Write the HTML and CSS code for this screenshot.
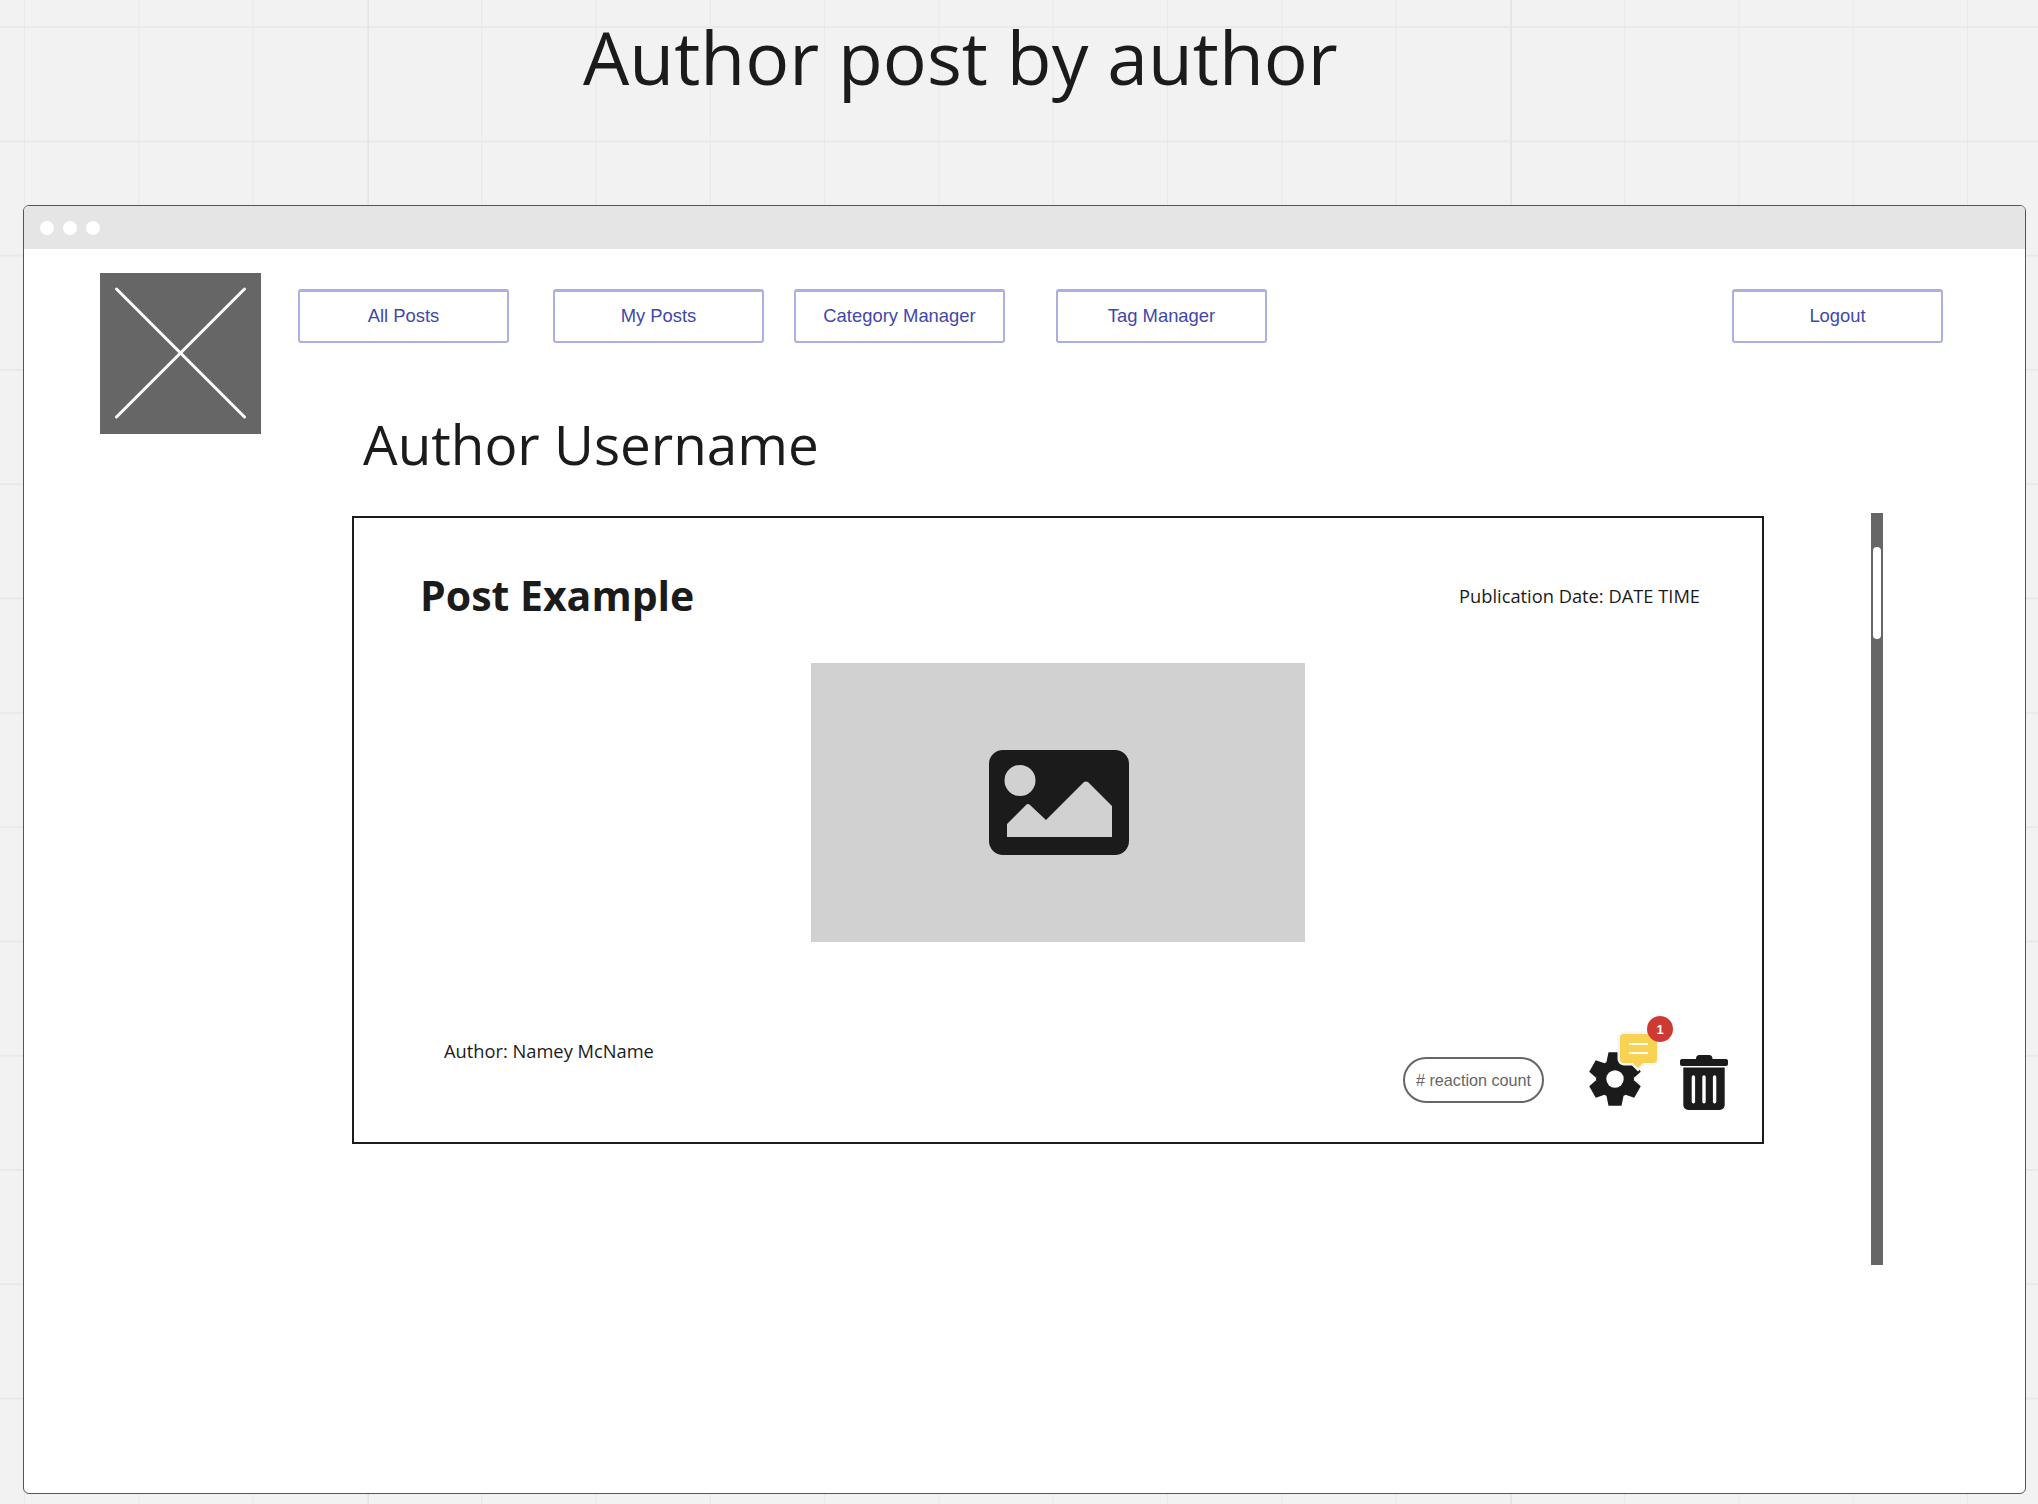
FILE: index.html
```html
<!DOCTYPE html>
<html lang="en">
<head>
    <meta charset="UTF-8">
    <meta name="viewport" content="width=device-width, initial-scale=1.0">
    <title>Author post by author</title>
    <link rel="stylesheet" href="styles.css">
</head>
<body>
    <h1 class="board-title">Author post by author</h1>

    <div class="window">
        <div class="window-bar">
            <span class="dot"></span>
            <span class="dot"></span>
            <span class="dot"></span>
        </div>

        <div class="window-body">
            <svg class="logo" viewBox="0 0 161 161">
                <rect width="161" height="161" fill="#666666"/>
                <path d="M16.500 16 L144.500 144 M144.500 16 L16.500 144" stroke="#ffffff" stroke-width="3" stroke-linecap="round"/>
            </svg>

            <div class="main">
                <nav class="nav">
                    <a class="nav-btn btn-all">All Posts</a>
                    <a class="nav-btn btn-my">My Posts</a>
                    <a class="nav-btn btn-cat">Category Manager</a>
                    <a class="nav-btn btn-tag">Tag Manager</a>
                    <a class="nav-btn btn-logout">Logout</a>
                </nav>

                <h2 class="username">Author Username</h2>

                <div class="feed">
                    <article class="post">
                        <header class="post-head">
                            <h3 class="post-title">Post Example</h3>
                            <span class="post-date">Publication Date: DATE TIME</span>
                        </header>

                        <div class="post-image">
                            <svg class="image-icon" viewBox="0 0 140 105">
                                <path fill="#1b1b1b" fill-rule="evenodd" d="M14 0 H126 A14 14 0 0 1 140 14 V91 A14 14 0 0 1 126 105 H14 A14 14 0 0 1 0 91 V14 A14 14 0 0 1 14 0 Z M31 15 A15.500 15.500 0 1 0 31 46 A15.500 15.500 0 1 0 31 15 Z M18 74 V87 H123 V56 L99 32 Q97 31 95 32 L57 70 L41 55 Q39 53 37 55 Z"/>
                            </svg>
                        </div>

                        <footer class="post-foot">
                            <span class="post-author">Author: Namey McName</span>
                            <div class="post-actions">
                                <span class="reactions"># reaction count</span>
                                <div class="gear-wrap">
                                    <svg class="gear" viewBox="-34 -34 68 68">
                                        <g fill="#1b1b1b">
                                            <circle r="19"/>
                                            <path d="M-8.500 -17 L-6.500 -26.700 H6.500 L8.500 -17 Z"/>
                                            <path transform="rotate(60)" d="M-8.500 -17 L-6.500 -26 H6.500 L8.500 -17 Z"/>
                                            <path transform="rotate(120)" d="M-8.500 -17 L-6.500 -26 H6.500 L8.500 -17 Z"/>
                                            <path transform="rotate(180)" d="M-8.500 -17 L-6.500 -26.700 H6.500 L8.500 -17 Z"/>
                                            <path transform="rotate(240)" d="M-8.500 -17 L-6.500 -26 H6.500 L8.500 -17 Z"/>
                                            <path transform="rotate(300)" d="M-8.500 -17 L-6.500 -26 H6.500 L8.500 -17 Z"/>
                                        </g>
                                        <circle r="8.700" fill="#ffffff"/>
                                    </svg>
                                    <svg class="comment" viewBox="0 0 47 42">
                                        <path fill="#f8d253" stroke="#f6f6f6" stroke-width="5" paint-order="stroke" d="M9 4 H38 A4 4 0 0 1 42 8 V29 A4 4 0 0 1 38 33 H28 L23 38 L18 33 H9 A4 4 0 0 1 5 29 V8 A4 4 0 0 1 9 4 Z"/>
                                        <path stroke="#fafafa" stroke-width="2.200" d="M14 14 H33 M14 23 H33"/>
                                    </svg>
                                    <span class="badge">1</span>
                                </div>
                                <svg class="trash" viewBox="0 0 48 55">
                                    <path fill="#1b1b1b" fill-rule="evenodd" d="M16 4 Q16 0 19.500 0 H29 Q32.500 0 32.500 4 H46 Q48 4 48 6 V9 Q48 11 46 11 H2 Q0 11 0 9 V6 Q0 4 2 4 Z M3.300 12.500 H44.700 V50 A5 5 0 0 1 39.700 55 H8.300 A5 5 0 0 1 3.300 50 Z M11.700 22 V46.700 A1.700 1.700 0 0 0 15.100 46.700 V22 A1.700 1.700 0 0 0 11.700 22 Z M22.300 22 V46.700 A1.700 1.700 0 0 0 25.700 46.700 V22 A1.700 1.700 0 0 0 22.300 22 Z M32.900 22 V46.700 A1.700 1.700 0 0 0 36.300 46.700 V22 A1.700 1.700 0 0 0 32.900 22 Z"/>
                                </svg>
                            </div>
                        </footer>
                    </article>

                    <div class="scrollbar"><div class="scroll-thumb"></div></div>
                </div>
            </div>
        </div>
    </div>
</body>
</html>
```

FILE: styles.css
```css
html, body {
    height: 100%;
}
body {
    margin: 0;
    height: 1504px;
    overflow: hidden;
    box-sizing: border-box;
    padding: 0 12px 10px 23px;
    display: flex;
    flex-direction: column;
    font-family: "Open Sans", sans-serif;
    color: #1b1b1b;
    background-color: #f2f2f2;
    background-image:
        linear-gradient(90deg, #e4e4e4 1px, transparent 1px),
        linear-gradient(#e9e9e9 2px, transparent 2px),
        linear-gradient(90deg, #e8e8e8 1px, transparent 1px);
    background-size: 1143px 100%, 114.3px 114.3px, 114.3px 114.3px;
    background-position: 368px 0, 0 26px, 24px 0;
}
.board-title {
    margin: 0;
    height: 205px;
    box-sizing: border-box;
    padding-left: 560px;
    font-size: 73.2px;
    font-weight: 400;
    line-height: 113px;
}
.window {
    flex: 1;
    display: flex;
    flex-direction: column;
    background: #ffffff;
    border: 1.5px solid #555555;
    border-radius: 6px;
    overflow: hidden;
}
.window-bar {
    height: 43px;
    flex: none;
    display: flex;
    align-items: center;
    gap: 9px;
    padding-left: 16px;
    background: #e5e5e5;
}
.dot {
    width: 14px;
    height: 14px;
    border-radius: 50%;
    background: #ffffff;
}
.window-body {
    flex: 1;
    display: flex;
    padding: 24px 0 0 76px;
}
.logo {
    width: 161px;
    height: 161px;
    flex: none;
}
.main {
    flex: 1;
    padding-left: 37px;
}
.nav {
    display: flex;
    padding: 16px 82px 0 0;
}
.nav-btn {
    box-sizing: border-box;
    width: 211px;
    height: 54px;
    display: flex;
    align-items: center;
    justify-content: center;
    padding-bottom: 1px;
    font-family: "Liberation Sans", Arial, sans-serif;
    font-size: 18.4px;
    color: #3f48ab;
    background: #ffffff;
    border: 2px solid #abafe2;
    border-top-width: 3px;
    border-radius: 3px;
}
.btn-my {
    margin-left: 44px;
}
.btn-cat {
    margin-left: 30px;
}
.btn-tag {
    margin-left: 51px;
}
.btn-logout {
    margin-left: auto;
}
.username {
    margin: 62px 0 0 65px;
    font-size: 54.8px;
    font-weight: 400;
    line-height: 78px;
}
.feed {
    display: flex;
    align-items: flex-start;
    margin-top: 30px;
    padding-left: 54px;
}
.post {
    box-sizing: border-box;
    width: 1412px;
    height: 628px;
    flex: none;
    display: flex;
    flex-direction: column;
    padding: 0 34px 0 67px;
    margin-top: 3px;
    border: 2.500px solid #1b1b1b;
}
.post-head {
    display: flex;
    align-items: center;
    justify-content: space-between;
    padding: 49px 28px 0 0;
}
.post-title {
    margin: 0 0 0 -1px;
    font-size: 41px;
    font-weight: 700;
    line-height: 56px;
}
.post-date {
    font-size: 18.3px;
}
.post-image {
    width: 494px;
    height: 279px;
    margin: 40px 0 0 390px;
    display: flex;
    align-items: center;
    justify-content: center;
    background: #d1d1d1;
}
.image-icon {
    width: 140px;
    height: 105px;
    margin-left: 2px;
}
.post-foot {
    display: flex;
    justify-content: space-between;
    padding-left: 23px;
}
.post-author {
    margin-top: 96px;
    font-size: 18.3px;
    line-height: 25px;
}
.post-actions {
    display: flex;
    align-items: flex-start;
    margin-top: 110px;
}
.reactions {
    box-sizing: border-box;
    width: 141px;
    height: 46px;
    margin-top: 5px;
    display: flex;
    align-items: center;
    justify-content: center;
    font-family: "Liberation Sans", Arial, sans-serif;
    font-size: 16.2px;
    color: #666666;
    border: 2.500px solid #666666;
    border-radius: 23px;
}
.gear-wrap {
    position: relative;
    width: 68px;
    height: 68px;
    margin: -7px 8px 0 37px;
}
.gear {
    width: 68px;
    height: 68px;
}
.comment {
    position: absolute;
    top: -15px;
    left: 34px;
    width: 47px;
    height: 42px;
}
.badge {
    position: absolute;
    top: -29px;
    left: 66px;
    width: 26px;
    height: 26px;
    display: flex;
    align-items: center;
    justify-content: center;
    font-family: "Liberation Sans", Arial, sans-serif;
    font-size: 13px;
    font-weight: 700;
    color: #ffffff;
    background: #cc3a33;
    border-radius: 50%;
}
.trash {
    width: 48px;
    height: 55px;
    flex: none;
    margin: 3px 0 0 23px;
}
.scrollbar {
    box-sizing: border-box;
    width: 12px;
    height: 752px;
    flex: none;
    margin-left: 107px;
    padding: 34px 2px 0;
    background: #666666;
}
.scroll-thumb {
    height: 92px;
    background: #ffffff;
    border-radius: 4px;
}
```
